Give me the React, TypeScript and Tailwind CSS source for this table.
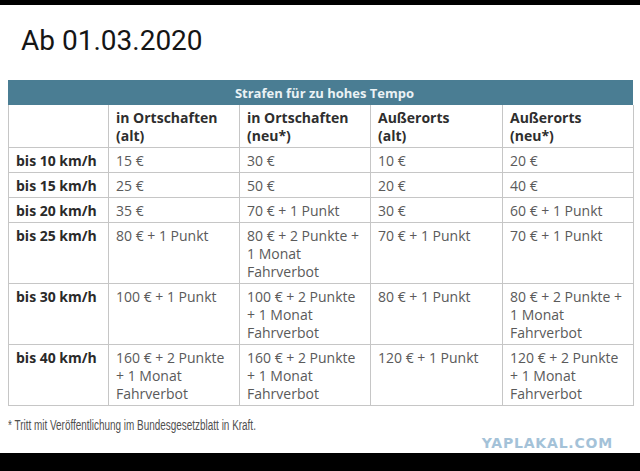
const rows: { label: string; cells: string[][] }[] = [
  { label: "bis 10 km/h", cells: [["15 €"], ["30 €"], ["10 €"], ["20 €"]] },
  { label: "bis 15 km/h", cells: [["25 €"], ["50 €"], ["20 €"], ["40 €"]] },
  {
    label: "bis 20 km/h",
    cells: [["35 €"], ["70 € + 1 Punkt"], ["30 €"], ["60 € + 1 Punkt"]],
  },
  {
    label: "bis 25 km/h",
    cells: [
      ["80 € + 1 Punkt"],
      ["80 € + 2 Punkte +", "1 Monat", "Fahrverbot"],
      ["70 € + 1 Punkt"],
      ["70 € + 1 Punkt"],
    ],
  },
  {
    label: "bis 30 km/h",
    cells: [
      ["100 € + 1 Punkt"],
      ["100 € + 2 Punkte", "+ 1 Monat", "Fahrverbot"],
      ["80 € + 1 Punkt"],
      ["80 € + 2 Punkte +", "1 Monat", "Fahrverbot"],
    ],
  },
  {
    label: "bis 40 km/h",
    cells: [
      ["160 € + 2 Punkte", "+ 1 Monat", "Fahrverbot"],
      ["160 € + 2 Punkte", "+ 1 Monat", "Fahrverbot"],
      ["120 € + 1 Punkt"],
      ["120 € + 2 Punkte", "+ 1 Monat", "Fahrverbot"],
    ],
  },
];

const heads = [
  ["in Ortschaften", "(alt)"],
  ["in Ortschaften", "(neu*)"],
  ["Außerorts", "(alt)"],
  ["Außerorts", "(neu*)"],
];

export default function App() {
  return (
    <div className="w-[640px] h-[471px] bg-white flex flex-col overflow-hidden">
      <div className="h-[5px] bg-black shrink-0" />

      <h1 className="mt-[22px] ml-[21px] text-[28px] leading-[28px] text-[#151515] font-['Roboto',sans-serif]">
        Ab 01.03.2020
      </h1>

      <div className="mt-[25px] ml-[8px] w-[625px] font-['Open_Sans',sans-serif] text-[14px] leading-[18px]">
        <div className="h-[25px] bg-[#4a7d93] text-[#eaf2f5] text-[13px] font-bold flex items-center justify-center pl-[8px]">
          Strafen für zu hohes Tempo
        </div>
        <table className="w-full table-fixed border-collapse">
          <colgroup>
            <col className="w-[100px]" />
            <col className="w-[131px]" />
            <col className="w-[131px]" />
            <col className="w-[132px]" />
            <col className="w-[131px]" />
          </colgroup>
          <tbody>
            <tr>
              <td className="border border-[#c6c6c6] border-t-0 px-[7px] pt-[4px] pb-[2px] align-top" />
              {heads.map((h, i) => (
                <td
                  key={i}
                  className="border border-[#c6c6c6] border-t-0 px-[7px] pt-[4px] pb-[2px] align-top font-bold text-[#2e2e2e]"
                >
                  {h.map((l, j) => (
                    <div key={j}>{l}</div>
                  ))}
                </td>
              ))}
            </tr>
            {rows.map((r) => (
              <tr key={r.label}>
                <td className="border border-[#c6c6c6] px-[7px] pt-[4px] pb-[2px] align-top font-bold text-[#2a2a2a] whitespace-nowrap">
                  {r.label}
                </td>
                {r.cells.map((c, i) => (
                  <td
                    key={i}
                    className="border border-[#c6c6c6] px-[7px] pt-[4px] pb-[2px] align-top text-[#5a5a5a] whitespace-nowrap"
                  >
                    {c.map((l, j) => (
                      <div key={j}>{l}</div>
                    ))}
                  </td>
                ))}
              </tr>
            ))}
          </tbody>
        </table>
      </div>

      <div className="mt-[11px] ml-[8px] w-[360px] origin-left scale-x-[0.71] text-[14px] leading-[17px] text-[#505050] font-['Liberation_Sans',sans-serif] whitespace-nowrap">
        * Tritt mit Veröffentlichung im Bundesgesetzblatt in Kraft.
      </div>

      <div className="mt-[1px] flex justify-end pr-[27px]">
        <span className="text-[14px] leading-[16px] font-bold tracking-[0.8px] text-[#a4c2d8] font-['DejaVu_Sans',sans-serif]">
          YAPLAKAL.COM
        </span>
      </div>

      <div className="mt-auto h-[18px] bg-black shrink-0" />
    </div>
  );
}
